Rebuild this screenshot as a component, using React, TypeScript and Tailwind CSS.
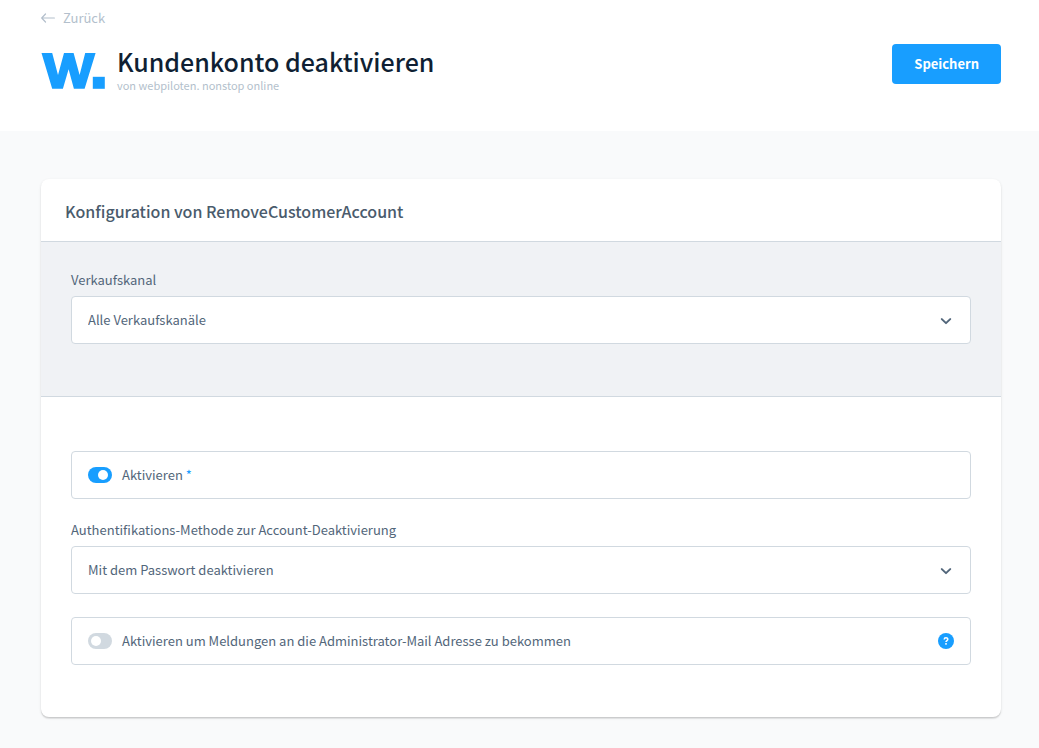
/**
 * App.tsx
 *
 * Plugin configuration page: header with back link, plugin logo, title and save
 * button, below it the card with the sales channel and the plugin's settings.
 */

import { ReactNode, useState } from "react";

function BackArrow() {
  return (
    <svg width="14" height="10" viewBox="0 0 14 10" fill="none" stroke="currentColor" strokeWidth="1.2" aria-hidden="true">
      <path d="M4.5 1 L0.7 5 L4.5 9 M0.7 5 H13.4" strokeLinecap="round" strokeLinejoin="round" />
    </svg>
  );
}

function PluginLogo() {
  return (
    <svg className="shrink-0" width="64" height="37" viewBox="0 0 64 37" fill="#189eff" role="img" aria-label="webpiloten">
      <path d="M0.5 0 H11.2 L17 22 L23 0 H32.6 L38.6 22 L44.2 0 H54.6 L43.6 35.8 H32.9 L27.6 16.2 L21.9 35.8 H11.2 Z" />
      <path d="M51.8 23.8 H63.8 V35.8 H51.8 Z" />
    </svg>
  );
}

function Chevron() {
  return (
    <svg
      className="pointer-events-none absolute top-[22px] right-[19px] text-[#52667a]"
      width="12"
      height="7"
      viewBox="0 0 12 7"
      fill="none"
      stroke="currentColor"
      strokeWidth="2"
      aria-hidden="true"
    >
      <path d="M1.8 1.1 L6 5.1 L10.2 1.1" strokeLinecap="round" strokeLinejoin="round" />
    </svg>
  );
}

interface SelectFieldProps {
  id: string;
  label: string;
  options: string[];
}

function SelectField({ id, label, options }: SelectFieldProps) {
  return (
    <div>
      <label htmlFor={id} className="mb-2 block leading-4">
        {label}
      </label>
      <div className="relative">
        <select
          id={id}
          className="block h-12 w-full appearance-none rounded border border-[#d1d9e0] bg-white px-4 outline-none focus:border-[#189eff]"
        >
          {options.map((option) => (
            <option key={option}>{option}</option>
          ))}
        </select>
        <Chevron />
      </div>
    </div>
  );
}

interface SwitchFieldProps {
  id: string;
  label: string;
  defaultChecked?: boolean;
  required?: boolean;
  children?: ReactNode;
}

function SwitchField({ id, label, defaultChecked = false, required, children }: SwitchFieldProps) {
  const [checked, setChecked] = useState(defaultChecked);

  return (
    <div className="flex h-12 items-center rounded border border-[#d1d9e0] bg-white px-4">
      <input
        id={id}
        type="checkbox"
        checked={checked}
        onChange={(e) => setChecked(e.target.checked)}
        className="flex h-4 w-6 shrink-0 appearance-none items-center rounded-full bg-[#d1d9e0] px-[3px] before:size-[10px] before:rounded-full before:bg-white checked:justify-end checked:bg-[#189eff] checked:px-1"
      />
      <label htmlFor={id} className="flex-1 pl-[10px]">
        {label}
        {required && <span className="text-[#189eff]"> *</span>}
      </label>
      {children}
    </div>
  );
}

export default function App() {
  return (
    <div className="min-h-screen bg-[#f9fafb] font-['Noto_Sans_CJK_SC','Noto_Sans',sans-serif] text-[13px] text-[#52667a]">
      <header className="bg-white pt-[10px] pr-[38px] pb-9 pl-[41px]">
        <a href="#" className="flex h-4 w-fit items-center gap-2 leading-4 text-[#b3bfcc]">
          <BackArrow />
          Zurück
        </a>
        <div className="mt-[18px] flex items-start justify-between">
          <div className="flex items-center gap-3 pt-[3px]">
            <PluginLogo />
            <div>
              <h1 className="text-[25px] leading-7 font-medium text-[#0f1f33]">Kundenkonto deaktivieren</h1>
              <p className="text-[11px] leading-5 text-[#b3bfcc]">von webpiloten. nonstop online</p>
            </div>
          </div>
          <button type="button" className="h-10 rounded bg-[#189eff] px-[22px] font-bold text-white">
            Speichern
          </button>
        </div>
      </header>

      <main className="pt-12 pr-[38px] pb-[31px] pl-[41px]">
        <section className="overflow-hidden rounded-lg bg-white shadow-[0_1px_1px_rgba(0,0,0,0.08),0_2px_1px_rgba(0,0,0,0.06),0_1px_3px_rgba(0,0,0,0.1)]">
          <h2 className="border-b border-[#d1d9e0] px-6 pt-5 pb-[18px] text-base leading-6 font-medium text-[#4a5b6c]">
            Konfiguration von RemoveCustomerAccount
          </h2>
          <div className="border-b border-[#d1d9e0] bg-[#f0f2f5] px-[30px] pt-[30px] pb-[52px]">
            <SelectField id="channel" label="Verkaufskanal" options={["Alle Verkaufskanäle"]} />
          </div>
          <div className="flex flex-col gap-[23px] px-[30px] pt-[54px] pb-[52px]">
            <SwitchField id="active" label="Aktivieren" defaultChecked required />
            <SelectField
              id="method"
              label="Authentifikations-Methode zur Account-Deaktivierung"
              options={["Mit dem Passwort deaktivieren"]}
            />
            <SwitchField id="notify" label="Aktivieren um Meldungen an die Administrator-Mail Adresse zu bekommen">
              <button
                type="button"
                aria-label="Hilfe"
                className="flex size-4 items-center justify-center rounded-full bg-[#189eff] text-white"
              >
                <svg width="16" height="16" viewBox="0 0 16 16" fill="none" stroke="currentColor" strokeWidth="1.5" aria-hidden="true">
                  <path d="M6.2 6.4 C6.2 4.2 9.8 4.2 9.8 6.3 C9.8 7.6 8 7.6 8 9" />
                  <path d="M8 10.1 V11.7" />
                </svg>
              </button>
            </SwitchField>
          </div>
        </section>
      </main>
    </div>
  );
}
